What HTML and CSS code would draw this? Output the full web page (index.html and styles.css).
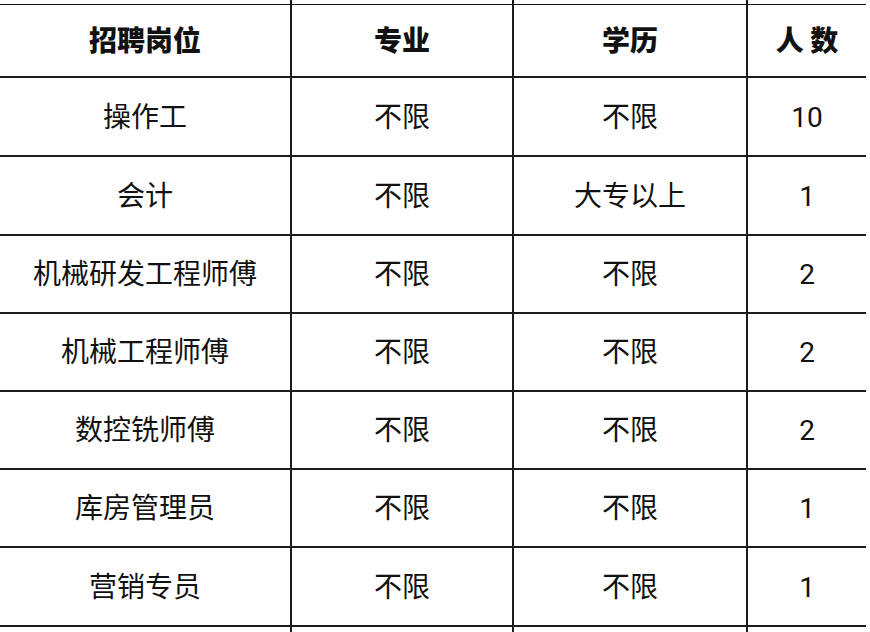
FILE: index.html
```html
<!DOCTYPE html>
<html lang="zh-CN">
<head>
<meta charset="utf-8">
<title>招聘岗位</title>
<link rel="stylesheet" href="styles.css">
</head>
<body>
<div class="sheet">
  <div class="grid stub">
    <div class="cell"></div><div class="cell"></div><div class="cell"></div><div class="cell"></div>
  </div>
  <div class="grid table">
    <div class="cell head">招聘岗位</div>
    <div class="cell head">专业</div>
    <div class="cell head">学历</div>
    <div class="cell head">人 数</div>

    <div class="cell">操作工</div>
    <div class="cell">不限</div>
    <div class="cell">不限</div>
    <div class="cell num">10</div>

    <div class="cell">会计</div>
    <div class="cell">不限</div>
    <div class="cell">大专以上</div>
    <div class="cell num">1</div>

    <div class="cell">机械研发工程师傅</div>
    <div class="cell">不限</div>
    <div class="cell">不限</div>
    <div class="cell num">2</div>

    <div class="cell">机械工程师傅</div>
    <div class="cell">不限</div>
    <div class="cell">不限</div>
    <div class="cell num">2</div>

    <div class="cell">数控铣师傅</div>
    <div class="cell">不限</div>
    <div class="cell">不限</div>
    <div class="cell num">2</div>

    <div class="cell">库房管理员</div>
    <div class="cell">不限</div>
    <div class="cell">不限</div>
    <div class="cell num">1</div>

    <div class="cell">营销专员</div>
    <div class="cell">不限</div>
    <div class="cell">不限</div>
    <div class="cell num">1</div>

    <div class="cell"></div>
    <div class="cell"></div>
    <div class="cell"></div>
    <div class="cell"></div>
  </div>
</div>
</body>
</html>
```

FILE: styles.css
```css
html, body {
  margin: 0;
  padding: 0;
  background: #ffffff;
}

body {
  width: 870px;
  height: 632px;
  overflow: hidden;
  font-family: "Noto Sans CJK SC", "Noto Sans", sans-serif;
  color: #111111;
}

.sheet {
  margin-left: -2px;
  width: 870px;
}

.grid {
  display: grid;
  grid-template-columns: 290px 220px 232px 118px;
  column-gap: 2px;
  row-gap: 2px;
  padding: 0 2px;
  width: 868px;
  box-sizing: border-box;
  background: #1c1c1c;
}

.stub {
  grid-template-rows: 1px;
}

.table {
  border-top: 4px solid #111111;
  grid-template-rows: 71px 77px 77px 76px 76px 76px 76px 77px 20px;
}

.cell {
  background: #ffffff;
  display: flex;
  align-items: center;
  justify-content: center;
  padding-bottom: 4px;
  box-sizing: border-box;
  font-size: 28px;
  line-height: 1;
  white-space: nowrap;
}

.head {
  font-weight: 900;
}

.num {
  font-family: Roboto, "Noto Sans CJK SC", sans-serif;
  padding: 2px 0 0;
}
```
